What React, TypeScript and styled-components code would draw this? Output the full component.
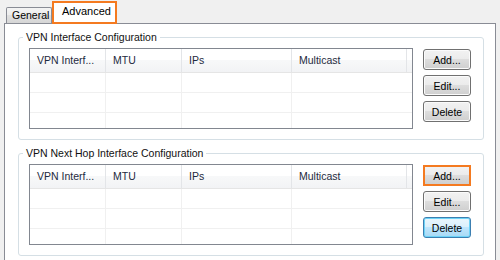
import * as React from "react";
import styled, { createGlobalStyle, css } from "styled-components";

const GlobalStyle = createGlobalStyle`
  html, body {
    margin: 0;
    padding: 0;
    background: #f0f0f0;
  }
  body {
    font-family: "Liberation Sans", Arial, sans-serif;
    font-size: 10.5px;
    color: #000;
  }
`;

const HIGHLIGHT = "#f47a20";

/* ── Window & tabs ── */

const Window = styled.div`
  width: 500px;
  height: 260px;
  box-sizing: border-box;
  padding: 0 4px;
  overflow: hidden;
  display: flex;
  flex-direction: column;
  background: #f0f0f0;
`;

const TabStrip = styled.div`
  height: 23px;
  flex: none;
  display: flex;
  align-items: flex-end;
  padding-left: 2px;
  position: relative;
  z-index: 1;
`;

const Tab = styled.div<{ $active?: boolean }>`
  box-sizing: border-box;
  line-height: 13px;
  white-space: nowrap;
  ${({ $active }) =>
    $active
      ? css`
          width: 65px;
          height: 23px;
          margin-bottom: -1px;
          padding: 2px 0 0 8px;
          font-size: 11px;
          background: #fff;
          border: 2px solid ${HIGHLIGHT};
        `
      : css`
          width: 46px;
          height: 16px;
          padding: 1px 0 0 5px;
          border: 1px solid #898c95;
          border-bottom: none;
          border-radius: 2px 2px 0 0;
          background: linear-gradient(#f4f4f4, #ececec 50%, #e0e0e0 50%, #d6d6d6);
        `}
`;

const Panel = styled.div`
  flex: 1;
  box-sizing: border-box;
  background: #fff;
  border: 1px solid #898c95;
  border-bottom: none;
  padding: 7px 11px 0 13px;
`;

/* ── Group box ── */

const GroupBox = styled.fieldset<{ $first?: boolean }>`
  margin: ${({ $first }) => ($first ? "0" : "7px 0 0")};
  padding: 4px 12px 10px 10px;
  border: 1px solid #d5dfe5;
  border-radius: 3px;
  min-width: 0;
`;

const Legend = styled.legend`
  padding: 0 3px;
  margin-left: -6px;
  line-height: 13px;
  color: #111;
`;

const GroupBody = styled.div`
  display: flex;
  gap: 10px;
  align-items: flex-start;
`;

/* ── List view ── */

const COLUMNS = "76px 76px 110px 115px 1fr";

const ListView = styled.div`
  width: 384px;
  height: 81px;
  box-sizing: border-box;
  border: 1px solid #828790;
  background: #fff;
  overflow: hidden;
`;

const HeaderRow = styled.div`
  display: grid;
  grid-template-columns: ${COLUMNS};
  height: 24px;
  box-sizing: border-box;
  border-bottom: 1px solid #e5e5e5;
  background: linear-gradient(#ffffff, #ffffff 50%, #f7f8f9 50%, #f2f3f5);
`;

const HeaderCell = styled.div<{ $filler?: boolean }>`
  padding-left: 7px;
  line-height: 23px;
  color: #1e2a40;
  white-space: nowrap;
  overflow: hidden;
  border-right: ${({ $filler }) => ($filler ? "none" : "1px solid #e3e5e8")};
`;

const Row = styled.div`
  display: grid;
  grid-template-columns: ${COLUMNS};
  height: 20px;
  box-sizing: border-box;
  border-bottom: 1px solid #f0f0f0;
`;

const Cell = styled.div<{ $noLine?: boolean }>`
  border-right: ${({ $noLine }) => ($noLine ? "none" : "1px solid #f0f0f0")};
`;

/* ── Buttons ── */

const ButtonColumn = styled.div`
  display: flex;
  flex-direction: column;
  gap: 5px;
  margin-top: 1px;
`;

const Button = styled.button<{ $variant?: "normal" | "marked" | "focused" }>`
  width: 48px;
  height: 21px;
  box-sizing: border-box;
  padding: 0;
  font: inherit;
  color: #000;
  border-radius: 3px;
  border: 1px solid #707070;
  background: linear-gradient(#f2f2f2, #ebebeb 50%, #dddddd 50%, #cfcfcf);
  box-shadow: inset 0 0 0 1px #fbfbfb;

  ${({ $variant }) =>
    $variant === "marked" &&
    css`
      border: 2px solid ${HIGHLIGHT};
      border-radius: 0;
      box-shadow: none;
    `}

  ${({ $variant }) =>
    $variant === "focused" &&
    css`
      border-color: #3c7fb1;
      background: linear-gradient(#eaf6fd, #d9f0fc 50%, #bee6fd 50%, #a7d9f5);
      box-shadow: inset 0 0 0 1px #6cd3f7;
    `}
`;

/* ── Sections ── */

const headers = ["VPN Interf...", "MTU", "IPs", "Multicast"];

const InterfaceTable = () => (
  <ListView>
    <HeaderRow>
      {headers.map((h) => (
        <HeaderCell key={h}>{h}</HeaderCell>
      ))}
      <HeaderCell $filler />
    </HeaderRow>
    {[0, 1, 2].map((r) => (
      <Row key={r}>
        <Cell />
        <Cell />
        <Cell />
        <Cell $noLine />
        <Cell $noLine />
      </Row>
    ))}
  </ListView>
);

interface ISectionProps {
  title: string;
  first?: boolean;
  addVariant?: "normal" | "marked";
  deleteVariant?: "normal" | "focused";
}

const Section = ({ title, first, addVariant, deleteVariant }: ISectionProps) => (
  <GroupBox $first={first}>
    <Legend>{title}</Legend>
    <GroupBody>
      <InterfaceTable />
      <ButtonColumn>
        <Button $variant={addVariant}>Add...</Button>
        <Button>Edit...</Button>
        <Button $variant={deleteVariant}>Delete</Button>
      </ButtonColumn>
    </GroupBody>
  </GroupBox>
);

export default function App() {
  return (
    <>
      <GlobalStyle />
      <Window>
        <TabStrip>
          <Tab>General</Tab>
          <Tab $active>Advanced</Tab>
        </TabStrip>
        <Panel>
          <Section title="VPN Interface Configuration" first />
          <Section
            title="VPN Next Hop Interface Configuration"
            addVariant="marked"
            deleteVariant="focused"
          />
        </Panel>
      </Window>
    </>
  );
}
